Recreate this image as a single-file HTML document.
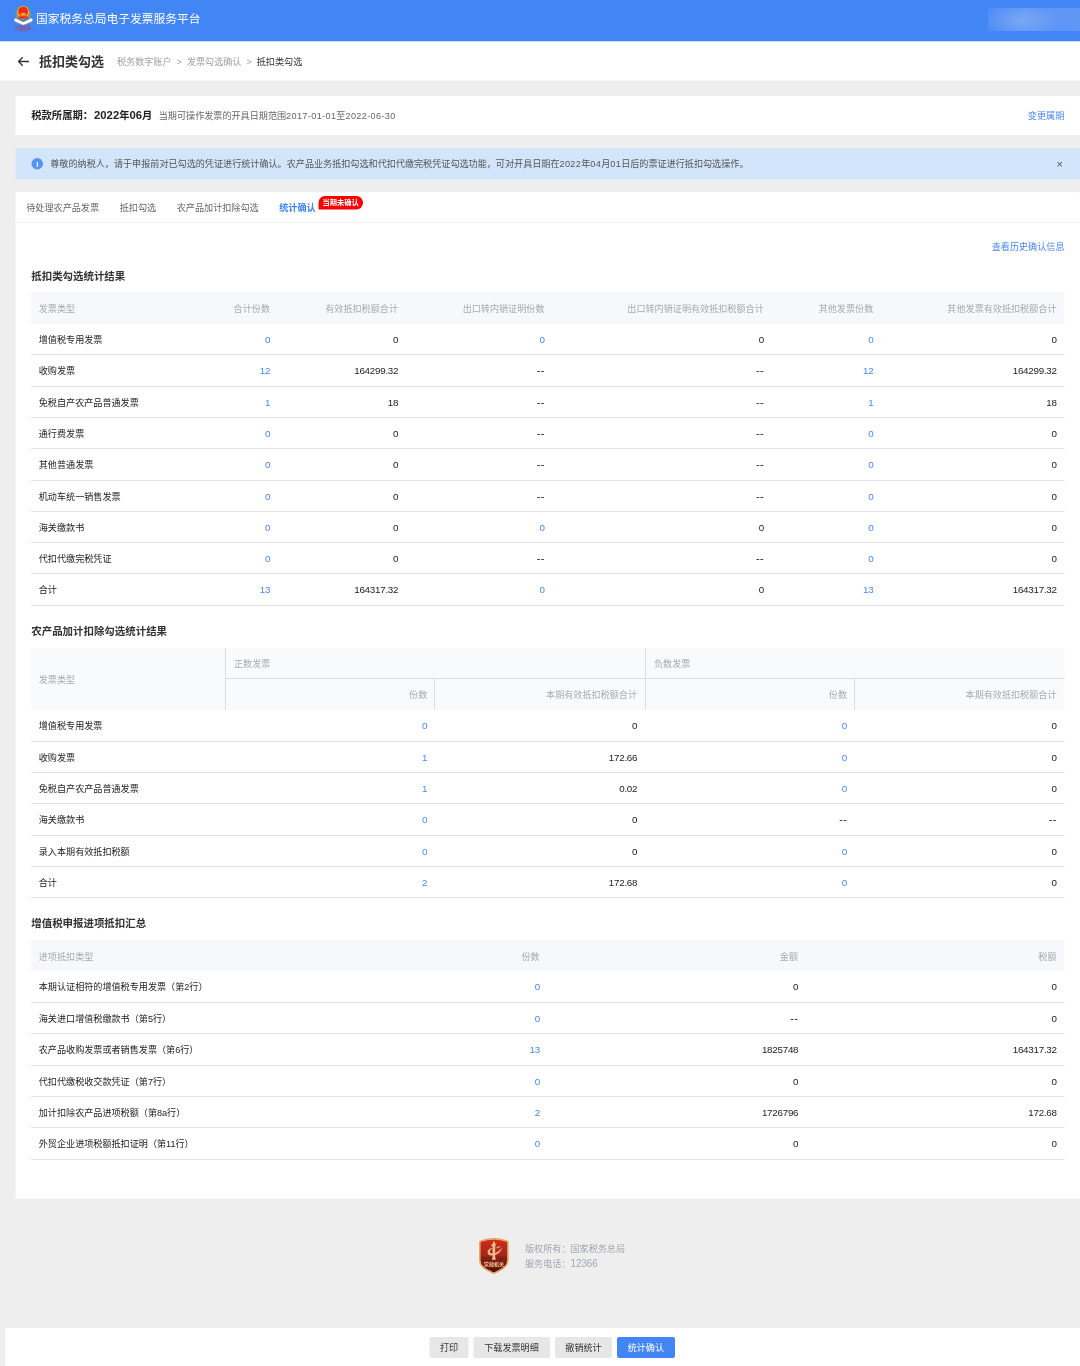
<!DOCTYPE html>
<html lang="zh-CN">
<head>
<meta charset="utf-8">
<title>抵扣类勾选 - 国家税务总局电子发票服务平台</title>
<style>
*{box-sizing:border-box;margin:0;padding:0}
html,body{width:1080px;height:1366px;overflow:hidden;background:#eee}
body{font-family:"Liberation Sans","Noto Sans CJK SC",sans-serif;color:#333}
#w{position:absolute;left:0;top:0;width:2160px;height:2732px;transform:scale(.5);transform-origin:0 0;background:#eee;font-size:18.2px;overflow:hidden}
.abs{position:absolute}
.n{letter-spacing:.75px}
.d{font-size:22.6px;line-height:20px;margin:0}
#hd{left:0;top:0;width:2160px;height:82.5px;background:#4285f4}
#hd .ttl{left:72px;top:0;height:81px;line-height:77px;color:#fff;font-size:23.5px;white-space:nowrap}
#hd .blur{left:1976px;top:16px;width:184px;height:46px;background:radial-gradient(ellipse 80px 36px at 66px 25px,rgba(255,255,255,.2),rgba(255,255,255,0) 100%),linear-gradient(90deg,#4d8bf4 0%,#5a93f5 40%,#6097f5 100%);filter:blur(.8px)}
#sub{left:0;top:82.5px;width:2160px;height:78.5px;background:#fff}
#sub .t{left:78px;top:0px;line-height:79px;font-size:26px;font-weight:bold;color:#333;white-space:nowrap}
#sub .bc{left:234px;top:2px;line-height:79px;font-size:18.2px;color:#a0a0a0;white-space:nowrap}
#sub .bc b{font-weight:normal;color:#333}
#sub .bc i{font-style:normal;margin:0 10px;color:#a0a0a0}
#c1{left:30.5px;top:192px;width:2130px;height:78px;background:#fff}
#c1 .p{left:32px;top:0;line-height:76px;font-size:20.6px;font-weight:bold;color:#222;white-space:nowrap}
#c1 .s{left:287px;top:1px;line-height:76px;font-size:18.2px;color:#666;white-space:nowrap}
#c1 .lk{right:32px;top:1px;line-height:76px;font-size:18.2px;color:#4887f5;white-space:nowrap}
#al{left:30.5px;top:296px;width:2129.5px;height:62.5px;background:#d2e5fb;border-radius:3px}
#al .ic{left:32.5px;top:20px;width:23px;height:23px;border-radius:50%;background:#5793f5;color:#fff;font-size:16px;line-height:23px;text-align:center;font-weight:bold;font-family:"Liberation Sans",sans-serif}
#al .tx{left:70px;top:0;line-height:65px;font-size:18.2px;color:#555;white-space:nowrap}
#al .x{left:2082px;top:0px;line-height:62px;font-size:23px;color:#555}
#mc{left:30.5px;top:384px;width:2129.5px;height:2012.5px;background:#fff;border-radius:0 3px 0 0}
#tabs{left:0;top:0;width:2129.5px;height:62px;border-bottom:2px solid #f3f3f3}
#tabs span{position:absolute;top:1px;line-height:62px;font-size:18.2px;color:#666;white-space:nowrap}
#tabs span.on{color:#4285f4;font-weight:bold}
#tabs .bdg{position:absolute;left:606px;top:8px;height:27px;width:89.5px;background:#f00;border-radius:13px 13px 13px 0;color:#fff;font-size:14.5px;font-weight:bold;line-height:24px;text-align:center;white-space:nowrap}
.hist{right:31px;top:96px;line-height:28px;font-size:18.2px;color:#4887f5;white-space:nowrap}
h3{position:absolute;left:32px;font-size:20.9px;font-weight:bold;color:#333;line-height:30px;white-space:nowrap}
.tb{position:absolute;left:31px;width:2067.5px;font-size:18.2px}
.r{display:flex;height:62.64px;border-bottom:2px solid #e2e2e2;line-height:65.5px;color:#222}
.r.h{background:#f7f8fc;border-bottom:0;line-height:67px;color:#aaa}
.c{flex:none;display:block;padding:0 16px;text-align:right;white-space:nowrap;overflow:visible}
.c.l{text-align:left}
.r .n{font-size:19.6px;letter-spacing:-.5px;position:relative;top:-1.75px;padding-right:15.5px}
.r .dd{font-size:22px;letter-spacing:.4px;padding-right:16px}
.r .a{color:#4887f6}
#t1 .c:nth-child(1){width:288px}#t1 .c:nth-child(2){width:206.5px}#t1 .c:nth-child(3){width:256px}#t1 .c:nth-child(4){width:293px}#t1 .c:nth-child(5){width:438.5px}#t1 .c:nth-child(6){width:219px}#t1 .c:nth-child(7){width:366.5px}
#t2 .r .c:nth-child(1){width:388.5px}#t2 .r .c:nth-child(2){width:418px}#t2 .r .c:nth-child(3){width:422px}#t2 .r .c:nth-child(4){width:418px}#t2 .r .c:nth-child(5){width:421px}
#t2 .hh{display:flex;height:124px;background:#f9fafb;color:#aaa}
#t2 .hh .c0{width:388.5px;line-height:126px;padding:0 16px}
#t2 .hh .g{width:840px;border-left:2px solid #ddd}
#t2 .hh .g+.g{width:839px}
#t2 .hh .g1{height:62px;line-height:65.5px;border-bottom:2px solid #ddd;padding:0 16px}
#t2 .hh .g2{display:flex;height:62px;line-height:64px}
#t2 .hh .g2 .c{width:416px;padding-right:13.5px}
#t2 .hh .g2 .c+.c{padding-right:16px}
#t2 .r .c:nth-child(2){padding-right:13.5px}#t2 .r .c:nth-child(4){padding-right:14px}#t2 .hh .g+.g .g2 .c:first-child{padding-right:14px}
#t2 .hh .g2 .c+.c{width:422px;border-left:2px solid #ddd}
#t2 .hh .g+.g .g2 .c+.c{width:421px}
#t3 .c{width:516.875px}
#ft{left:0;top:2396.5px;width:2160px;height:259px}
#ft .tx{left:1050px;top:86px;font-size:18.2px;line-height:30px;color:#a3a7b4;white-space:nowrap}
#bar{left:10px;top:2656px;width:2150px;height:76px;background:#fff}
.btn{position:absolute;top:17.5px;height:42px;line-height:44.5px;background:#e7e7e7;color:#333;font-size:18.2px;text-align:center;border-radius:4px;white-space:nowrap}
.btn.pr{background:#4285f4;color:#fff}
</style>
</head>
<body>
<div id="w">
  <div id="hd" class="abs">
    <svg class="abs" style="left:26px;top:8px" width="44" height="58" viewBox="0 0 44 58">
      <path d="M6.5 14 Q2.5 26 9 32 L20.6 37.5 L32 32 Q38.5 26 34.5 14 Z" fill="#8f8f8f"/>
      <path d="M9.5 27 L20.6 32.5 L31.5 27 L31.5 30 L20.6 35.5 L9.5 30 Z" fill="#6f747c"/>
      <circle cx="20.4" cy="15.6" r="12.3" fill="#f2a71b"/>
      <circle cx="20.4" cy="15" r="9.7" fill="#ea2a1e"/>
      <ellipse cx="20.4" cy="20.6" rx="5.6" ry="3" fill="#f7a81c"/>
      <rect x="12.5" y="24.6" width="16" height="4.2" fill="#dc2a1c"/>
      <path d="M2 30.5 L5 28.5 L20.8 36.5 L36.5 28.5 L39.5 30.5 L38 34.5 L20.8 42 L3.5 34.5 Z" fill="#fff"/>
      <path d="M3.5 34.5 L20.8 42 L38 34.5 L37.6 35.6 L20.8 43 L4 35.6 Z" fill="#c9ccd2"/>
      <text transform="translate(20.2 52.6) scale(1 1.35)" x="0" y="0" font-size="8" fill="#d9251c" text-anchor="middle" font-family="'Liberation Serif','Noto Serif CJK SC',serif">中国税务</text>
    </svg>
    <div class="abs ttl">国家税务总局电子发票服务平台</div>
    <div class="abs blur"></div>
  </div>
  <div id="sub" class="abs">
    <svg class="abs" style="left:35px;top:29px" width="24" height="22" viewBox="0 0 24 22"><path d="M10.5 2.5 L2 11 L10.5 19.5 M2.5 11 H23" fill="none" stroke="#333" stroke-width="2.7"/></svg>
    <div class="abs t">抵扣类勾选</div>
    <div class="abs bc">税务数字账户<i>&gt;</i>发票勾选确认<i>&gt;</i><b>抵扣类勾选</b></div>
  </div>
  <div id="c1" class="abs">
    <div class="abs p">税款所属期：<span class="d" style="margin-left:2px">2022</span>年<span class="d">06</span>月</div>
    <div class="abs s">当期可操作发票的开具日期范围<span class="n">2017-01-01</span>至<span class="n">2022-06-30</span></div>
    <div class="abs lk">变更属期</div>
  </div>
  <div id="al" class="abs">
    <div class="abs ic">i</div>
    <div class="abs tx">尊敬的纳税人，请于申报前对已勾选的凭证进行统计确认。农产品业务抵扣勾选和代扣代缴完税凭证勾选功能，可对开具日期在<span class="n">2022</span>年<span class="n">04</span>月<span class="n">01</span>日后的票证进行抵扣勾选操作。</div>
    <div class="abs x">×</div>
  </div>
  <div id="mc" class="abs">
    <div id="tabs" class="abs">
      <span style="left:22px">待处理农产品发票</span>
      <span style="left:209px">抵扣勾选</span>
      <span style="left:323px">农产品加计扣除勾选</span>
      <span class="on" style="left:528px">统计确认</span>
      <div class="bdg">当期未确认</div>
    </div>
    <div class="abs hist">查看历史确认信息</div>
    <h3 style="top:153px">抵扣类勾选统计结果</h3>
    <div class="tb" id="t1" style="top:200px">
      <div class="r h" style="height:64px"><span class="c l">发票类型</span><span class="c">合计份数</span><span class="c">有效抵扣税额合计</span><span class="c">出口转内销证明份数</span><span class="c">出口转内销证明有效抵扣税额合计</span><span class="c">其他发票份数</span><span class="c">其他发票有效抵扣税额合计</span></div>
      <div class="r" style="height:62px"><span class="c l">增值税专用发票</span><span class="c n a">0</span><span class="c n">0</span><span class="c n a">0</span><span class="c n">0</span><span class="c n a">0</span><span class="c n">0</span></div>
      <div class="r" style="height:64px"><span class="c l">收购发票</span><span class="c n a">12</span><span class="c n">164299.32</span><span class="c n dd">--</span><span class="c n dd">--</span><span class="c n a">12</span><span class="c n">164299.32</span></div>
      <div class="r" style="height:62px"><span class="c l">免税自产农产品普通发票</span><span class="c n a">1</span><span class="c n">18</span><span class="c n dd">--</span><span class="c n dd">--</span><span class="c n a">1</span><span class="c n">18</span></div>
      <div class="r" style="height:62px"><span class="c l">通行费发票</span><span class="c n a">0</span><span class="c n">0</span><span class="c n dd">--</span><span class="c n dd">--</span><span class="c n a">0</span><span class="c n">0</span></div>
      <div class="r" style="height:64px"><span class="c l">其他普通发票</span><span class="c n a">0</span><span class="c n">0</span><span class="c n dd">--</span><span class="c n dd">--</span><span class="c n a">0</span><span class="c n">0</span></div>
      <div class="r" style="height:62px"><span class="c l">机动车统一销售发票</span><span class="c n a">0</span><span class="c n">0</span><span class="c n dd">--</span><span class="c n dd">--</span><span class="c n a">0</span><span class="c n">0</span></div>
      <div class="r" style="height:62px"><span class="c l">海关缴款书</span><span class="c n a">0</span><span class="c n">0</span><span class="c n a">0</span><span class="c n">0</span><span class="c n a">0</span><span class="c n">0</span></div>
      <div class="r" style="height:62px"><span class="c l">代扣代缴完税凭证</span><span class="c n a">0</span><span class="c n">0</span><span class="c n dd">--</span><span class="c n dd">--</span><span class="c n a">0</span><span class="c n">0</span></div>
      <div class="r" style="height:64px"><span class="c l">合计</span><span class="c n a">13</span><span class="c n">164317.32</span><span class="c n a">0</span><span class="c n">0</span><span class="c n a">13</span><span class="c n">164317.32</span></div>
    </div>
    <h3 style="top:863px">农产品加计扣除勾选统计结果</h3>
    <div class="tb" id="t2" style="top:912px">
      <div class="hh"><div class="c0">发票类型</div><div class="g"><div class="g1">正数发票</div><div class="g2"><span class="c">份数</span><span class="c">本期有效抵扣税额合计</span></div></div><div class="g"><div class="g1">负数发票</div><div class="g2"><span class="c">份数</span><span class="c">本期有效抵扣税额合计</span></div></div></div>
      <div class="r" style="height:64px"><span class="c l">增值税专用发票</span><span class="c n a">0</span><span class="c n">0</span><span class="c n a">0</span><span class="c n">0</span></div>
      <div class="r" style="height:62px"><span class="c l">收购发票</span><span class="c n a">1</span><span class="c n">172.66</span><span class="c n a">0</span><span class="c n">0</span></div>
      <div class="r" style="height:62px"><span class="c l">免税自产农产品普通发票</span><span class="c n a">1</span><span class="c n">0.02</span><span class="c n a">0</span><span class="c n">0</span></div>
      <div class="r" style="height:64px"><span class="c l">海关缴款书</span><span class="c n a">0</span><span class="c n">0</span><span class="c n dd">--</span><span class="c n dd">--</span></div>
      <div class="r" style="height:62px"><span class="c l">录入本期有效抵扣税额</span><span class="c n a">0</span><span class="c n">0</span><span class="c n a">0</span><span class="c n">0</span></div>
      <div class="r" style="height:62px"><span class="c l">合计</span><span class="c n a">2</span><span class="c n">172.68</span><span class="c n a">0</span><span class="c n">0</span></div>
    </div>
    <h3 style="top:1447px">增值税申报进项抵扣汇总</h3>
    <div class="tb" id="t3" style="top:1496px">
      <div class="r h" style="height:62px"><span class="c l">进项抵扣类型</span><span class="c">份数</span><span class="c">金额</span><span class="c">税额</span></div>
      <div class="r" style="height:64px"><span class="c l">本期认证相符的增值税专用发票（第2行）</span><span class="c n a">0</span><span class="c n">0</span><span class="c n">0</span></div>
      <div class="r" style="height:62px"><span class="c l">海关进口增值税缴款书（第5行）</span><span class="c n a">0</span><span class="c n dd">--</span><span class="c n">0</span></div>
      <div class="r" style="height:64px"><span class="c l">农产品收购发票或者销售发票（第6行）</span><span class="c n a">13</span><span class="c n">1825748</span><span class="c n">164317.32</span></div>
      <div class="r" style="height:62px"><span class="c l">代扣代缴税收交款凭证（第7行）</span><span class="c n a">0</span><span class="c n">0</span><span class="c n">0</span></div>
      <div class="r" style="height:62px"><span class="c l">加计扣除农产品进项税额（第8a行）</span><span class="c n a">2</span><span class="c n">1726796</span><span class="c n">172.68</span></div>
      <div class="r" style="height:64px"><span class="c l">外贸企业进项税额抵扣证明（第11行）</span><span class="c n a">0</span><span class="c n">0</span><span class="c n">0</span></div>
    </div>
  </div>
  <div id="ft" class="abs">
    <svg class="abs" style="left:956px;top:76px" width="64" height="78" viewBox="0 0 64 78">
      <defs><linearGradient id="sg" x1="0" y1="0" x2="0" y2="1"><stop offset="0" stop-color="#dc2a16"/><stop offset=".2" stop-color="#b92b1c"/><stop offset=".5" stop-color="#a3261a"/><stop offset=".52" stop-color="#8a2117"/><stop offset=".8" stop-color="#6e160f"/><stop offset="1" stop-color="#4e0b08"/></linearGradient></defs>
      <path d="M3.6 11.6 Q3.6 9.6 6 8.8 Q31.7 0.6 57.4 8.8 Q59.8 9.6 59.8 11.6 L59.8 48 C59.8 61 44 68.5 31.7 73.4 C19.4 68.5 3.6 61 3.6 48 Z" fill="url(#sg)" stroke="#e4a868" stroke-width="3.2" stroke-linejoin="round"/>
      <path d="M30.4 10 L33 10 L34.2 15 L37.5 13.5 L34.6 18 L34.2 40 L35.6 46.5 L27.8 46.5 L29.2 40 L29 19 L24.8 18 L29.2 15.5 Z" fill="#ecc088"/>
      <path d="M19 32 Q19 24 31 22 Q23 27 23.5 31 Q25 35.5 33 33.5 Q43 30.5 48 21 Q46 33 34 37 Q20 40 19 32 Z" fill="#ecc088"/>
      <path d="M37 21.5 Q43 18.5 47 19.5 Q42 21 38.5 24 Z" fill="#ecc088"/>
      <text x="32" y="59.6" font-size="10.2" fill="#f0c896" text-anchor="middle" font-weight="bold" font-family="'Liberation Sans','Noto Sans CJK SC',sans-serif">党政机关</text>
    </svg>
    <div class="abs tx">版权所有：国家税务总局<br>服务电话：<span style="font-size:20px;letter-spacing:-.2px;line-height:20px">12366</span></div>
  </div>
  <div id="bar" class="abs">
    <div class="btn" style="left:849px;width:78px">打印</div>
    <div class="btn" style="left:936.5px;width:153px">下载发票明细</div>
    <div class="btn" style="left:1100px;width:114px">撤销统计</div>
    <div class="btn pr" style="left:1224px;width:115.5px">统计确认</div>
  </div>
</div>
</body>
</html>
